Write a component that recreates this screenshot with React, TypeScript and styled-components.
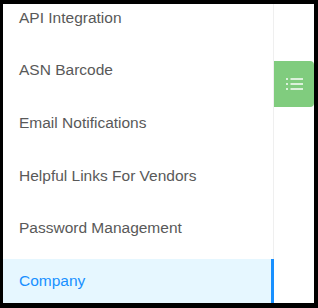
import React from "react";
import styled, { createGlobalStyle } from "styled-components";

const GlobalStyle = createGlobalStyle`
	html, body {
		margin: 0;
		padding: 0;
		background: #000;
	}
	body {
		font-family: "Liberation Sans", Arial, sans-serif;
	}
`;

const items = [
	"API Integration",
	"ASN Barcode",
	"Email Notifications",
	"Helpful Links For Vendors",
	"Password Management",
	"Company",
];

export default function App() {
	const active = "Company";

	return (
		<>
			<GlobalStyle />
			<Frame>
				<Panel>
					<Sidebar>
						<Menu>
							{items.map((label) => (
								<MenuItem key={label} $active={label === active}>
									{label}
								</MenuItem>
							))}
						</Menu>
					</Sidebar>
					<Aside>
						<ToggleButton aria-label="Toggle menu">
							<ListIcon />
						</ToggleButton>
					</Aside>
				</Panel>
			</Frame>
		</>
	);
}

function ListIcon() {
	return (
		<svg width="18" height="14" viewBox="0 0 18 14" fill="none">
			{[2, 7, 12].map((y) => (
				<g key={y} fill="rgba(255,255,255,0.9)">
					<rect x="0" y={y - 0.8} width="2" height="1.6" />
					<rect x="4.5" y={y - 0.8} width="12.5" height="1.6" />
				</g>
			))}
		</svg>
	);
}

const Frame = styled.div`
	padding: 4px 4px 5px 3px;
	width: 318px;
	height: 308px;
	box-sizing: border-box;
`;

const Panel = styled.div`
	display: flex;
	height: 100%;
	background: #fff;
	overflow: hidden;
`;

const Sidebar = styled.nav`
	width: 271px;
	flex-shrink: 0;
	border-right: 1px solid #efefef;
	box-sizing: border-box;
`;

const Menu = styled.ul`
	list-style: none;
	margin: -8.5px 0 0;
	padding: 0;
	display: flex;
	flex-direction: column;
	gap: 8.7px;
`;

const MenuItem = styled.li<{ $active?: boolean }>`
	position: relative;
	width: calc(100% + 1px);
	height: 44px;
	padding-left: 16px;
	box-sizing: border-box;
	display: flex;
	align-items: center;
	font-size: 15.5px;
	color: ${(p) => (p.$active ? "#1890ff" : "#595959")};
	background: ${(p) => (p.$active ? "#e6f7ff" : "transparent")};
	white-space: nowrap;

	&::after {
		content: "";
		position: absolute;
		top: 0;
		right: 0;
		bottom: 0;
		border-right: 3px solid #1890ff;
		display: ${(p) => (p.$active ? "block" : "none")};
	}
`;

const Aside = styled.div`
	flex: 1;
	padding-top: 57px;
`;

const ToggleButton = styled.button`
	display: flex;
	align-items: center;
	justify-content: center;
	width: 100%;
	height: 46px;
	padding: 0 0 0 1px;
	border: none;
	border-radius: 0 4px 4px 0;
	background: #80cc7e;
	cursor: pointer;
`;
